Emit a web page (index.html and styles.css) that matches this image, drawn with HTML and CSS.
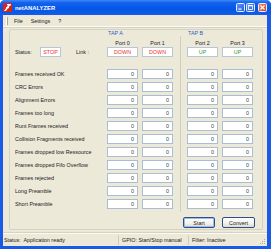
FILE: index.html
```html
<!DOCTYPE html>
<html>
<head>
<meta charset="utf-8">
<title>netANALYZER</title>
<link rel="stylesheet" href="styles.css">
</head>
<body>
<div class="win">
  <div class="titlebar">
    <svg class="appicon" viewBox="0 0 9 9" width="9" height="9">
      <rect x="0" y="0" width="9" height="9" fill="#d8241c"/>
      <polygon points="1,8 6,1 8,1 3,8" fill="#fff"/>
      <rect x="4" y="1" width="4" height="1.4" fill="#fff"/>
      <rect x="3" y="4" width="3" height="1.2" fill="#fff"/>
    </svg>
    <span class="title">netANALYZER</span>
    <div class="tbtns">
      <span class="tb tb-min"><svg viewBox="0 0 7 7" width="7" height="7"><rect x="1.5" y="4.5" width="3" height="1.2" fill="#fff"/></svg></span>
      <span class="tb tb-max"><svg viewBox="0 0 7 7" width="7" height="7"><rect x="1.5" y="1.5" width="4" height="4" fill="none" stroke="#fff" stroke-width="0.8"/><rect x="1.5" y="1.3" width="4" height="1" fill="#fff"/></svg></span>
      <span class="tb tb-close"><svg viewBox="0 0 7 7" width="7" height="7"><path d="M1.5 1.5 L5.5 5.5 M5.5 1.5 L1.5 5.5" stroke="#fff" stroke-width="1.2"/></svg></span>
    </div>
  </div>
  <div class="frame">
    <div class="menubar">
      <span class="grip"></span>
      <span class="mi">File</span>
      <span class="mi">Settings</span>
      <span class="mi">?</span>
    </div>
    <div class="content">
      <div class="group">
        <div class="tap tap-a">TAP A</div>
        <div class="tap tap-b">TAP B</div>
        <div class="plabel p0 r2">Port 0</div>
        <div class="plabel p1 r2">Port 1</div>
        <div class="plabel p2 r2">Port 2</div>
        <div class="plabel p3 r2">Port 3</div>
        <div class="statuscell">
          <span class="st-label">Status:</span>
          <span class="sb stop red">STOP</span>
          <span class="link-label">Link :</span>
        </div>
        <div class="sb red p0 r3">DOWN</div>
        <div class="sb red p1 r3">DOWN</div>
        <div class="sb green p2 r3">UP</div>
        <div class="sb green p3 r3">UP</div>
        <div class="vsep"></div>

        <div class="lbl first">Frames received OK</div>
        <div class="nb p0">0</div><div class="nb p1">0</div><div class="nb p2">0</div><div class="nb p3">0</div>
        <div class="lbl">CRC Errors</div>
        <div class="nb p0">0</div><div class="nb p1">0</div><div class="nb p2">0</div><div class="nb p3">0</div>
        <div class="lbl">Alignment Errors</div>
        <div class="nb p0">0</div><div class="nb p1">0</div><div class="nb p2">0</div><div class="nb p3">0</div>
        <div class="lbl">Frames too long</div>
        <div class="nb p0">0</div><div class="nb p1">0</div><div class="nb p2">0</div><div class="nb p3">0</div>
        <div class="lbl">Runt Frames received</div>
        <div class="nb p0">0</div><div class="nb p1">0</div><div class="nb p2">0</div><div class="nb p3">0</div>
        <div class="lbl">Collision Fragments received</div>
        <div class="nb p0">0</div><div class="nb p1">0</div><div class="nb p2">0</div><div class="nb p3">0</div>
        <div class="lbl">Frames dropped low Ressource</div>
        <div class="nb p0">0</div><div class="nb p1">0</div><div class="nb p2">0</div><div class="nb p3">0</div>
        <div class="lbl">Frames dropped Fifo Overflow</div>
        <div class="nb p0">0</div><div class="nb p1">0</div><div class="nb p2">0</div><div class="nb p3">0</div>
        <div class="lbl">Frames rejected</div>
        <div class="nb p0">0</div><div class="nb p1">0</div><div class="nb p2">0</div><div class="nb p3">0</div>
        <div class="lbl">Long Preamble</div>
        <div class="nb p0">0</div><div class="nb p1">0</div><div class="nb p2">0</div><div class="nb p3">0</div>
        <div class="lbl">Short Preamble</div>
        <div class="nb p0">0</div><div class="nb p1">0</div><div class="nb p2">0</div><div class="nb p3">0</div>

        <div class="actions">
          <button class="btn btn-start">Start</button>
          <button class="btn btn-convert">Convert</button>
        </div>
      </div>
    </div>
    <div class="statusbar">
      <div class="pane pane1">Status:&nbsp; Application ready</div>
      <div class="pane pane2">GPIO: Start/Stop manual</div>
      <div class="pane pane3">Filter: Inactive</div>
      <svg class="sgrip" viewBox="0 0 7 7" width="7" height="7">
        <rect x="5" y="1" width="1" height="1" fill="#b0ad9e"/>
        <rect x="3" y="3" width="1" height="1" fill="#b0ad9e"/>
        <rect x="5" y="3" width="1" height="1" fill="#b0ad9e"/>
        <rect x="1" y="5" width="1" height="1" fill="#b0ad9e"/>
        <rect x="3" y="5" width="1" height="1" fill="#b0ad9e"/>
        <rect x="5" y="5" width="1" height="1" fill="#b0ad9e"/>
      </svg>
    </div>
  </div>
</div>
</body>
</html>
```
FILE: styles.css
```css
* { box-sizing: border-box; }
html, body { margin: 0; padding: 0; }
body {
  width: 271px;
  height: 249px;
  overflow: hidden;
  background: #fff;
  font-family: "Liberation Sans", Arial, sans-serif;
  font-size: 5.4px;
  color: #1a1a1a;
}
.win {
  width: 271px;
  height: 249px;
  display: flex;
  flex-direction: column;
  background: #1a5ae8;
  border-radius: 5px 5px 0 0;
  overflow: hidden;
}
.titlebar {
  flex: none;
  height: 15px;
  display: flex;
  align-items: center;
  padding: 0 4px 0 3px;
  background: linear-gradient(#3d8af7 0%, #1462ee 18%, #0656e6 55%, #0a5be8 85%, #1a5ae8 100%);
}
.appicon { display: block; flex: none; }
.title {
  margin-left: 3px;
  color: #fff;
  font-weight: bold;
  font-size: 5.8px;
  letter-spacing: 0.05px;
}
.tbtns { margin-left: auto; display: flex; align-items: center; }
.tb {
  width: 9px;
  height: 9px;
  border: 1px solid #e8eefc;
  border-radius: 1.5px;
  background: linear-gradient(135deg, #5a95fb, #2860e8);
  display: flex;
  align-items: center;
  justify-content: center;
}
.tb svg { display: block; }
.tb-max { margin-left: 1px; }
.tb-close {
  margin-left: 3px;
  background: linear-gradient(135deg, #f08a62, #d9401c);
}

.frame {
  flex: 1;
  margin: 0 4px 3px 3px;
  background: #ece9d8;
  display: flex;
  flex-direction: column;
}
.menubar {
  flex: none;
  height: 13px;
  display: flex;
  align-items: center;
  padding-left: 3px;
  border-bottom: 1px solid #d6d2c2;
  box-shadow: inset 0 -1px 0 #fbfaf4;
}
.grip {
  width: 2px;
  height: 8px;
  margin-right: 6px;
  border-left: 1px solid #fff;
  border-right: 1px solid #a8a594;
}
.mi { margin-right: 8px; }

.content {
  flex: 1;
  padding: 1px 4px 0 6px;
}
.group {
  border: 1px solid #d5d2c1;
  border-radius: 2px;
  display: grid;
  grid-template-columns: 97px 31px 4px 31px 14px 31px 4px 31px 1fr;
  grid-template-rows: 5px 12px 22px repeat(11, 13px) 17px;
}
.tap {
  grid-row: 1;
  color: #2d5fcb;
  line-height: 5px;
  padding-left: 1px;
  align-self: center;
}
.tap-a { grid-column: 2 / 5; margin-top: 2px; }
.tap-b { grid-column: 6 / 9; margin-top: 2px; }
.plabel {
  text-align: center;
  align-self: end;
  line-height: 7px;
}
.r2 { grid-row: 2; }
.r3 { grid-row: 3; }
.p0 { grid-column: 2; }
.p1 { grid-column: 4; }
.p2 { grid-column: 6; }
.p3 { grid-column: 8; }

.statuscell {
  grid-row: 3;
  grid-column: 1;
  display: flex;
  align-items: center;
  height: 10px;
  padding-left: 5px;
}
.st-label { width: 25px; }
.sb {
  height: 10px;
  border: 1px solid #b8c6d8;
  background: #fff;
  text-align: center;
  line-height: 8px;
  align-self: start;
}
.stop { width: 21px; }
.link-label { margin-left: 15px; }
.red { color: #e8322a; }
.green { color: #1f9a2a; }

.vsep {
  grid-column: 5;
  grid-row: 2 / 15;
  justify-self: center;
  width: 1px;
  background: #d2cfbf;
  margin-top: 1px;
}

.lbl {
  grid-column: 1;
  padding-left: 5px;
  height: 10px;
  line-height: 10px;
  white-space: nowrap;
}
.lbl.first { grid-row: 4; }
.nb {
  height: 10px;
  border: 1px solid #a9bdd3;
  background: #fff;
  text-align: right;
  padding-right: 3px;
  line-height: 8px;
  color: #444;
}

.actions {
  grid-row: 15;
  grid-column: 1 / -1;
  display: flex;
  justify-content: flex-end;
  align-items: flex-end;
  gap: 7px;
  padding: 0 7px 1px 0;
}
.btn {
  height: 11px;
  padding: 0;
  margin: 0;
  font-family: inherit;
  font-size: 5.4px;
  color: #1a1a1a;
  border: 1px solid #2a4f8c;
  border-radius: 2px;
  background: linear-gradient(#ffffff, #f2f1ea 60%, #dedbcd);
}
.btn-start { width: 32px; box-shadow: inset 0 0 0 1px #9cbcf0; }
.btn-convert { width: 33px; }

.statusbar {
  flex: none;
  height: 14px;
  display: flex;
  align-items: center;
  border-top: 1px solid #d6d2c2;
  box-shadow: inset 0 1px 0 #fbfaf4;
}
.pane {
  height: 10px;
  line-height: 10px;
  white-space: nowrap;
}
.pane1 { width: 116px; padding-left: 1px; border-right: 1px solid #d0ccbc; }
.pane2 { width: 70px; padding-left: 3px; border-right: 1px solid #d0ccbc; }
.pane3 { flex: 1; padding-left: 3px; }
.sgrip { align-self: flex-end; margin: 0 1px 1px 0; }
```
